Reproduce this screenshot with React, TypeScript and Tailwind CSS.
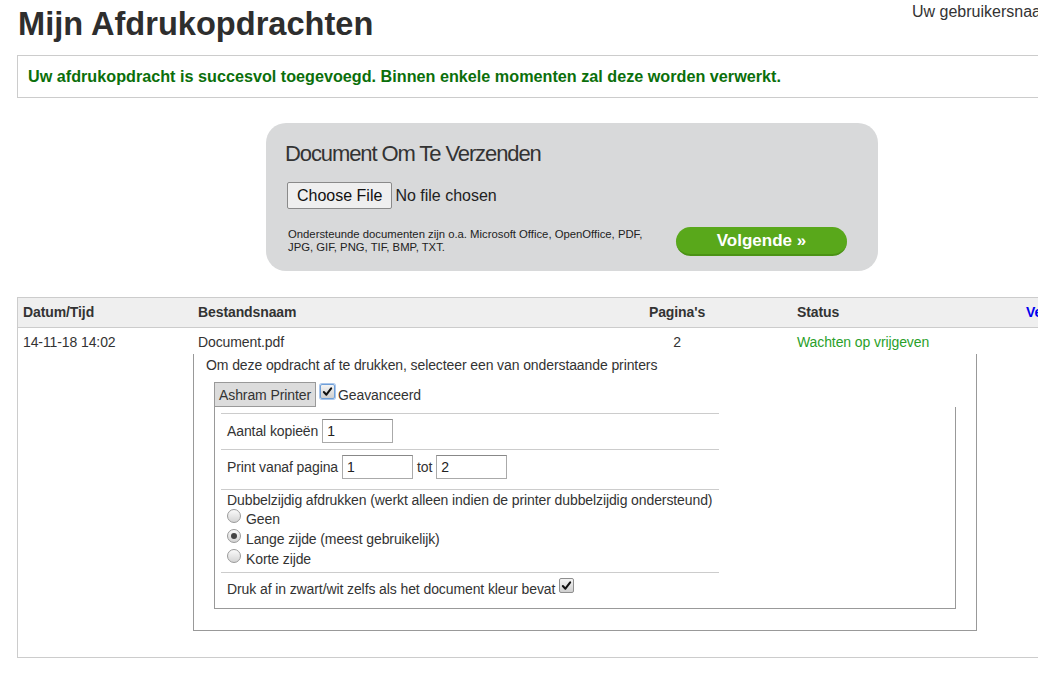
const Check = ({ focus }: { focus?: boolean }) => (
  <span
    className={`inline-flex items-center justify-center w-[15px] h-[15px] rounded-[2px] border bg-gradient-to-b from-[#f4f4f4] to-[#cfcfcf] ${
      focus ? "border-[#6f9fd8] ring-1 ring-[#a9c6ec]" : "border-[#8f8f8f]"
    }`}
  >
    <svg viewBox="0 0 12 12" className="w-[11px] h-[11px]">
      <path d="M2 6.5 L4.8 9.5 L10 2.5" fill="none" stroke="#111" strokeWidth="2.2" strokeLinecap="round" strokeLinejoin="round" />
    </svg>
  </span>
);

const Radio = ({ on }: { on?: boolean }) => (
  <span className="inline-flex items-center justify-center w-[14px] h-[14px] rounded-full border border-[#9a9a9a] bg-gradient-to-b from-[#fafafa] to-[#d4d4d4] mr-[5px] -mt-[6px]">
    {on && <span className="w-[6px] h-[6px] rounded-full bg-[#444]" />}
  </span>
);

const Field = ({ value }: { value: string }) => (
  <span className="inline-flex items-center h-[24px] w-[71px] border border-[#aaa] border-t-[#888] bg-white pl-[4px] text-[14px] text-[#222]">
    {value}
  </span>
);

export default function App() {
  return (
    <div className="w-[1038px] h-[675px] overflow-hidden bg-white text-[#333] font-['Liberation_Sans',Arial,sans-serif]">
      <div className="w-[1140px]">
        <header className="flex items-start h-[55px]">
          <h1 className="w-[912px] pl-[18px] mt-[6px] text-[32.6px] leading-[36px] font-bold text-[#2e2e2e]">
            Mijn Afdrukopdrachten
          </h1>
          <div className="mt-[2px] text-[16px] leading-[20px] text-[#333]">Uw gebruikersnaam</div>
        </header>

        <div className="ml-[17px] h-[43px] flex items-center px-[10px] border border-[#ccc] text-[16.2px] font-bold text-[#0b6f0b]">
          Uw afdrukopdracht is succesvol toegevoegd. Binnen enkele momenten zal deze worden verwerkt.
        </div>

        <section className="ml-[266px] mt-[25px] w-[612px] h-[148px] rounded-[20px] bg-[#d8d9da] pl-[19px] pr-[31px] pt-[18px]">
          <h2 className="text-[22px] leading-[26px] tracking-[-1.1px] text-[#333]">Document Om Te Verzenden</h2>
          <div className="mt-[15px] flex items-center h-[27px]">
            <span className="ml-[2px] h-[27px] px-[9px] flex items-center rounded-[2px] border border-[#8a8a8a] bg-[#efefef] text-[16px] text-[#111]">
              Choose File
            </span>
            <span className="ml-[3px] text-[16px] text-[#222]">No file chosen</span>
          </div>
          <div className="mt-[18px] flex items-start justify-between">
            <p className="ml-[3px] mt-[1px] text-[11.3px] leading-[13px] text-[#222]">
              Ondersteunde documenten zijn o.a. Microsoft Office, OpenOffice, PDF,
              <br />
              JPG, GIF, PNG, TIF, BMP, TXT.
            </p>
            <button className="w-[171px] h-[29px] rounded-full bg-[#59a81b] border-b-[2px] border-[#4b9214] text-white text-[17px] font-bold">
              Volgende »
            </button>
          </div>
        </section>

        <section className="ml-[17px] mt-[26px] border border-[#ccc] pb-[26px] text-[14px] tracking-[-0.1px]">
          <div className="flex h-[30px] items-center bg-[#efefef] border-b border-[#ccc] font-bold text-[#333]">
            <div className="w-[175px] pl-[5px]">Datum/Tijd</div>
            <div className="w-[369px] pl-[5px]">Bestandsnaam</div>
            <div className="w-[230px] text-center">Pagina's</div>
            <div className="w-[229px] pl-[5px]">Status</div>
            <div className="pl-[5px] text-[#0000ee]">Ve</div>
          </div>
          <div className="flex h-[26px] pt-[4px] leading-[20px] text-[#333]">
            <div className="w-[175px] pl-[5px]">14-11-18 14:02</div>
            <div className="w-[369px] pl-[5px]">Document.pdf</div>
            <div className="w-[230px] text-center">2</div>
            <div className="w-[229px] pl-[5px] text-[#2a9f2a]">Wachten op vrijgeven</div>
          </div>

          <div className="ml-[175px] w-[784px] border-x border-b border-[#999] pl-[12px] pt-[1px] pb-[21px] leading-[20px]">
            <div>Om deze opdracht af te drukken, selecteer een van onderstaande printers</div>
            <div className="mt-[7px] ml-[8px] flex items-center">
              <span className="h-[25px] px-[4px] flex items-center border border-[#999] bg-[#dcdcdc]">Ashram Printer</span>
              <span className="ml-[4px] mr-[3px] -mt-[6px]"><Check focus /></span>
              <span>Geavanceerd</span>
            </div>
            <div className="ml-[8px] w-[742px] border-x border-b border-[#999] pt-[6px] pb-[9px]">
              <div className="ml-[6px] w-[498px]">
                <div className="border-t border-[#ccc] pl-[6px] pt-[5px] pb-[6px] flex items-center gap-[4px]">
                  <span>Aantal kopieën</span>
                  <Field value="1" />
                </div>
                <div className="border-t border-[#ccc] pl-[6px] pt-[5px] pb-[10px] flex items-center gap-[4px]">
                  <span>Print vanaf pagina</span>
                  <Field value="1" />
                  <span>tot</span>
                  <Field value="2" />
                </div>
                <div className="border-t border-[#ccc] pl-[6px] pb-[3px]">
                  <div className="leading-[18px] pt-[1px] whitespace-nowrap">
                    Dubbelzijdig afdrukken (werkt alleen indien de printer dubbelzijdig ondersteund)
                  </div>
                  <div className="h-[20px] flex items-center"><Radio />Geen</div>
                  <div className="h-[20px] flex items-center"><Radio on />Lange zijde (meest gebruikelijk)</div>
                  <div className="h-[20px] flex items-center"><Radio />Korte zijde</div>
                </div>
                <div className="border-t border-[#ccc] pl-[6px] pt-[6px] flex items-center whitespace-nowrap">
                  <span>Druk af in zwart/wit zelfs als het document kleur bevat</span>
                  <span className="ml-[4px] -mt-[6px]"><Check /></span>
                </div>
              </div>
            </div>
          </div>
        </section>
      </div>
    </div>
  );
}
